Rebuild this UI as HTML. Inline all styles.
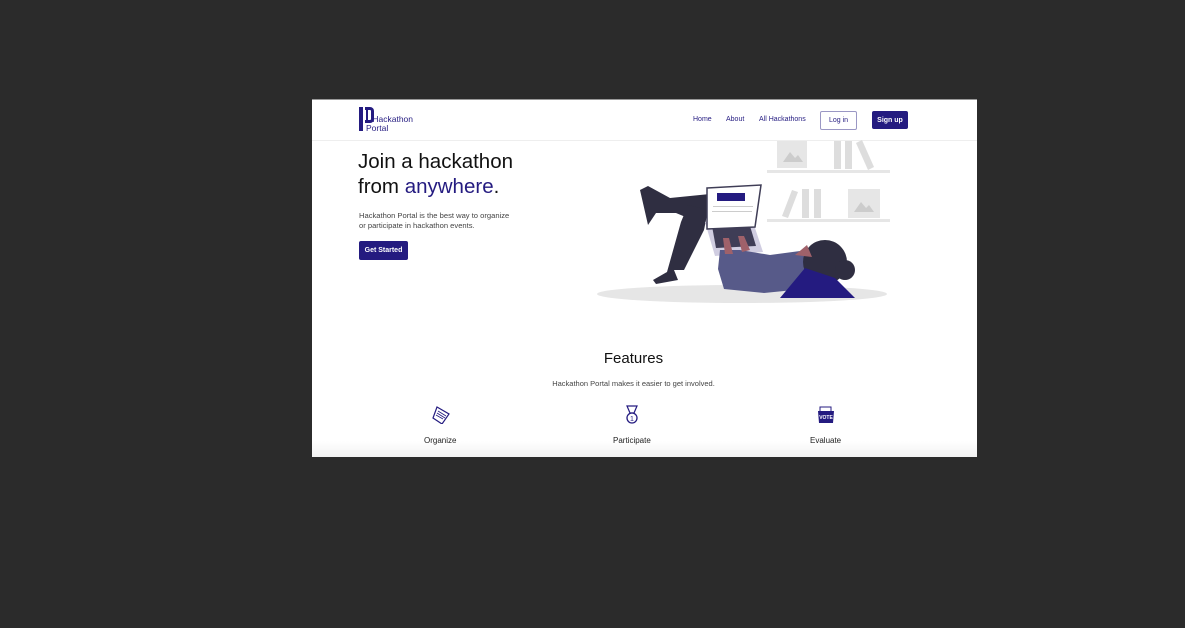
<!DOCTYPE html>
<html><head><style>
*{margin:0;padding:0;box-sizing:border-box}
body{width:1185px;height:628px;background:#2b2b2b;font-family:"Liberation Sans",sans-serif;position:relative;overflow:hidden}
#pg{position:absolute;left:312px;top:99px;width:665px;height:358px;background:#fff;overflow:hidden}
.a{position:absolute;white-space:nowrap}
.nav{font-size:7px;color:#241b80}
.btn{display:flex;align-items:center;justify-content:center}
</style></head><body>
<div id="pg">
 <div class="a" style="left:0;top:0;width:665px;height:1px;background:#999"></div>
 <div class="a" style="left:0;top:41px;width:665px;height:1px;background:#eee"></div>
 <!-- logo -->
 <div class="a" style="left:47px;top:8px;width:4px;height:24px;background:#241b80"></div>
 <div class="a" style="left:53px;top:8px;width:9px;height:16px;border:3px solid #241b80;border-left:none;border-radius:0 4px 4px 0"></div>
 <div class="a" style="left:54px;top:11px;width:2px;height:10px;background:#241b80"></div>
 <div class="a" style="left:58px;top:16px;font-size:8.5px;line-height:9px;color:#241b80">&nbsp;Hackathon</div>
 <div class="a" style="left:54px;top:25px;font-size:8.5px;line-height:9px;color:#241b80">Portal</div>
 <div class="a nav" style="left:381px;top:17px">Home</div>
 <div class="a nav" style="left:414px;top:17px">About</div>
 <div class="a nav" style="left:447px;top:17px">All Hackathons</div>
 <div class="a nav btn" style="left:508px;top:12px;width:37px;height:19px;border:1px solid #9a97c4;border-radius:2px">Log in</div>
 <div class="a btn" style="left:560px;top:12px;width:36px;height:18px;background:#241b80;border-radius:2px;color:#fff;font-size:7px;font-weight:bold">Sign up</div>
 <div class="a" style="left:46px;top:50px;font-size:20.5px;line-height:25px;color:#111">Join a hackathon<br>from <span style="color:#241b80">anywhere</span>.</div>
 <div class="a" style="left:47px;top:112px;font-size:7.6px;line-height:10px;color:#444">Hackathon Portal is the best way to organize<br>or participate in hackathon events.</div>
 <div class="a btn" style="left:47px;top:142px;width:49px;height:19px;background:#241b80;border-radius:2px;color:#fff;font-size:7px;font-weight:bold">Get Started</div>
 <!-- illustration -->
 <svg class="a" style="left:280px;top:40px" width="300" height="170" viewBox="592 139 300 170">
  <ellipse cx="742" cy="294" rx="145" ry="9" fill="#e6e6e6"/>
  <rect x="767" y="170" width="123" height="3" fill="#e6e6e6"/>
  <rect x="767" y="219" width="123" height="3" fill="#e6e6e6"/>
  <rect x="777" y="141" width="30" height="27" fill="#e6e6e6"/>
  <path d="M783 162l7-10 5 6 3-3 5 7z" fill="#ccc"/>
  <rect x="834" y="141" width="7" height="28" fill="#ddd"/><rect x="845" y="141" width="7" height="28" fill="#ddd"/>
  <path d="M856 143l6-3 12 27-6 3z" fill="#ddd"/>
  <path d="M782 216l10-26 6 2-10 26z" fill="#ddd"/>
  <rect x="802" y="189" width="7" height="29" fill="#ddd"/><rect x="814" y="189" width="7" height="29" fill="#ddd"/>
  <rect x="848" y="189" width="32" height="29" fill="#e6e6e6"/>
  <path d="M854 212l7-10 5 6 3-3 5 7z" fill="#ccc"/>
  <path d="M640 190l8-4 22 12 40-4 0 22-22 2-12-5-20 0-8 12z" fill="#2f2e41"/>
  <path d="M688 205l20 5-4 20-20 40-10 0 4 10-22 4-3-4 14-8 14-50z" fill="#2f2e41"/>
  <path d="M705 222l48 0 10 30-48 4z" fill="#d0cde1"/>
  <path d="M712 226l38 0 6 20-40 2z" fill="#3f3d56"/>
  <path d="M707 188l54-3-6 42-48 2z" fill="#fff" stroke="#3f3d56" stroke-width="1.5"/>
  <rect x="717" y="193" width="28" height="8" fill="#241b80"/>
  <rect x="713" y="206" width="40" height="1" fill="#ccc"/><rect x="712" y="211" width="40" height="1" fill="#ccc"/>
  <path d="M720 250l20 0 30 5 30-4 20 10 4 26-60 6-40-4-6-20z" fill="#575a89"/>
  <path d="M723 238l6 0 4 16-8 0zM738 236l6 0 6 14-8 2z" fill="#9f616a"/>
  <circle cx="825" cy="262" r="22" fill="#2f2e41"/>
  <circle cx="845" cy="270" r="10" fill="#2f2e41"/>
  <path d="M795 255l12-10 5 12z" fill="#9f616a"/>
  <path d="M780 298l25-30 30 10 20 20z" fill="#241b80"/>
 </svg>
 <div class="a" style="left:0;top:251px;width:643px;text-align:center;font-size:15px;color:#111">Features</div>
 <div class="a" style="left:0;top:280px;width:643px;text-align:center;font-size:7.5px;color:#444">Hackathon Portal makes it easier to get involved.</div>
 <div class="a" style="left:0;top:342px;width:665px;height:16px;background:linear-gradient(#fff,#f2f2f2)"></div>
 <!-- icons -->
 <svg class="a" style="left:120px;top:307px" width="18" height="18" viewBox="0 0 18 18"><path d="M5 1l12 7-7 10-9-6z" fill="#fff" stroke="#241b80" stroke-width="1.2"/><path d="M6 5l8 5M5 7l8 5M4 9l7 4" stroke="#241b80" stroke-width=".8"/></svg>
 <div class="a" style="left:112px;top:337px;font-size:8px;color:#222">Organize</div>
 <svg class="a" style="left:313px;top:306px" width="14" height="20" viewBox="0 0 14 20"><path d="M2 1h10l-3 7h-4z" fill="none" stroke="#241b80" stroke-width="1.2"/><circle cx="7" cy="13" r="5" fill="#fff" stroke="#241b80" stroke-width="1.3"/><text x="7" y="16" font-size="7" text-anchor="middle" fill="#241b80" font-family="Liberation Sans">1</text></svg>
 <div class="a" style="left:301px;top:337px;font-size:8px;color:#222">Participate</div>
 <svg class="a" style="left:505px;top:307px" width="18" height="18" viewBox="0 0 18 18"><rect x="3" y="1" width="11" height="6" fill="#fff" stroke="#241b80"/><path d="M1 5h16l-1 12H2z" fill="#241b80"/><text x="9" y="13" font-size="5" text-anchor="middle" fill="#fff" font-family="Liberation Sans" font-weight="bold">VOTE</text></svg>
 <div class="a" style="left:498px;top:337px;font-size:8px;color:#222">Evaluate</div>
</div>
</body></html>
